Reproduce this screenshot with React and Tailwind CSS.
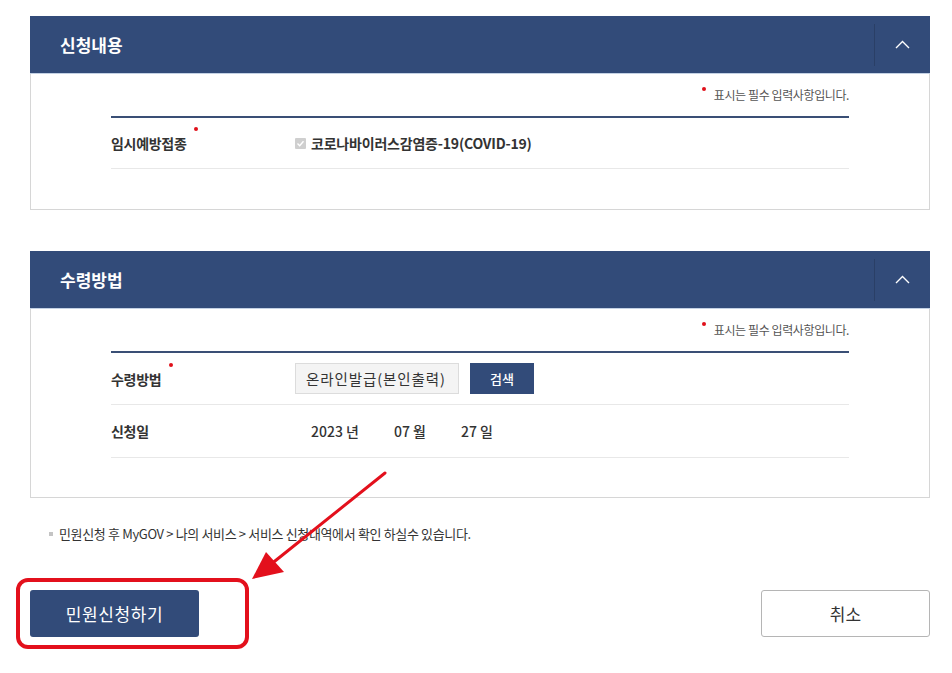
import React from "react";

const FONT = { fontFamily: '"Noto Sans CJK KR", "Noto Sans", sans-serif' };

function Chevron() {
  return (
    <svg width="15" height="9" viewBox="0 0 15 9" fill="none">
      <path d="M1 8 L7.5 1.5 L14 8" stroke="#ffffff" strokeWidth="1.4" />
    </svg>
  );
}

function Header({ title }) {
  return (
    <div className="h-[58px] bg-[#324b79] flex items-center justify-between border-b border-[#c3d1e4]">
      <div className="pl-[30px] text-white text-[17px] font-bold tracking-[0px]">{title}</div>
      <div className="w-[56px] h-[42px] border-l border-[#2a3f66] flex items-center justify-center">
        <Chevron />
      </div>
    </div>
  );
}

function RequiredNote() {
  return (
    <div className="flex justify-end items-start h-[18px]">
      <span className="w-[4px] h-[4px] rounded-full bg-[#e0101a] mr-[8px] mt-[1px]" />
      <span className="text-[12px] leading-[18px] text-[#555] tracking-[-0.4px]">
        표시는 필수 입력사항입니다.
      </span>
    </div>
  );
}

function Label({ children, required }) {
  return (
    <div className="w-[184px] flex items-start">
      <span className="text-[14px] font-bold text-[#333] tracking-[-0.3px] leading-[20px]">{children}</span>
      {required && <span className="w-[4px] h-[4px] rounded-full bg-[#e0101a] ml-[8px] -mt-[6px]" />}
    </div>
  );
}

export default function App() {
  return (
    <div className="relative w-[952px] h-[673px] bg-white pl-[30px] pr-[22px] pt-[16px]" style={FONT}>
      {/* Panel 1 */}
      <div>
        <Header title="신청내용" />
        <div className="border-x border-b border-[#d6d6d6] px-[80px] pt-[12px] pb-[40px]">
          <RequiredNote />
          <div className="mt-[12px] h-[2px] bg-[#3a4f75]" />
          <div className="h-[51px] flex items-center border-b border-[#e8e8e8]">
            <Label required>임시예방접종</Label>
            <div className="flex items-center">
              <span className="w-[11px] h-[11px] bg-[#cfcfcf] rounded-[1px] flex items-center justify-center mr-[5px]">
                <svg width="9" height="9" viewBox="0 0 9 9" fill="none">
                  <path d="M1.5 4.5 L3.7 6.7 L7.5 2.3" stroke="#ffffff" strokeWidth="1.4" />
                </svg>
              </span>
              <span className="text-[14px] font-bold text-[#333] tracking-[-0.2px]">
                코로나바이러스감염증-19(COVID-19)
              </span>
            </div>
          </div>
        </div>
      </div>

      {/* Panel 2 */}
      <div className="mt-[41px]">
        <Header title="수령방법" />
        <div className="border-x border-b border-[#d6d6d6] px-[80px] pt-[12px] pb-[39px]">
          <RequiredNote />
          <div className="mt-[12px] h-[2px] bg-[#3a4f75]" />
          <div className="h-[52px] flex items-center border-b border-[#e8e8e8]">
            <Label required>수령방법</Label>
            <div className="flex items-center">
              <div className="w-[164px] h-[31px] bg-[#f4f4f4] border border-[#dcdcdc] flex items-center pl-[10px] text-[14.5px] text-[#333] tracking-[0.9px]">
                온라인발급(본인출력)
              </div>
              <div className="ml-[11px] w-[64px] h-[31px] bg-[#324b79] text-white text-[13px] font-medium flex items-center justify-center">
                검색
              </div>
            </div>
          </div>
          <div className="h-[53px] flex items-center border-b border-[#e8e8e8]">
            <Label>신청일</Label>
            <div className="flex items-center pl-[16px] text-[14px] text-[#333] font-medium">
              <span>2023 년</span>
              <span className="ml-[35px]">07 월</span>
              <span className="ml-[35px]">27 일</span>
            </div>
          </div>
        </div>
      </div>

      {/* Note */}
      <div className="mt-[27px] pl-[19px] flex items-center h-[18px]">
        <span className="w-[4px] h-[4px] bg-[#c4c4c4] mr-[6px]" />
        <span className="text-[13px] text-[#333] tracking-[-0.35px] leading-[18px]">
          민원신청 후 MyGOV &gt; 나의 서비스 &gt; 서비스 신청내역에서 확인 하실수 있습니다.
        </span>
      </div>

      {/* Buttons */}
      <div className="mt-[47px] flex justify-between">
        <div className="w-[169px] h-[47px] rounded-[3px] bg-[#324b79] text-white text-[17px] flex items-center justify-center tracking-[0.6px]">
          민원신청하기
        </div>
        <div className="w-[169px] h-[47px] rounded-[3px] bg-white border border-[#b5b5b5] text-[#333] text-[17px] flex items-center justify-center">
          취소
        </div>
      </div>

      {/* Annotation */}
      <div className="absolute left-[16px] top-[578px] w-[233px] h-[71px] border-[4px] border-[#e3101c] rounded-[12px] pointer-events-none" />
      <svg className="absolute left-0 top-0 pointer-events-none" width="952" height="673" viewBox="0 0 952 673">
        <line x1="385" y1="473" x2="270" y2="565" stroke="#e3101c" strokeWidth="3" strokeLinecap="round" />
        <polygon points="252,579 266,552 284,572" fill="#e3101c" />
      </svg>
    </div>
  );
}
